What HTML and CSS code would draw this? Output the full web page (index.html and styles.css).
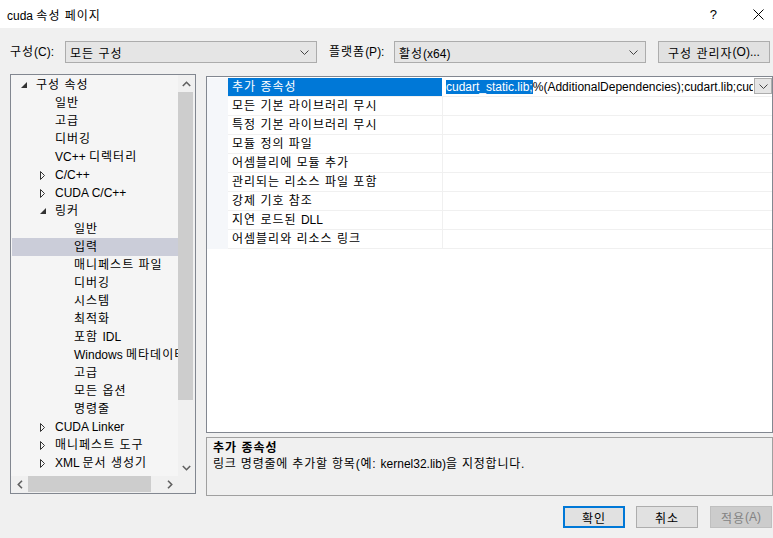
FILE: index.html
```html
<!DOCTYPE html>
<html lang="ko">
<head>
<meta charset="utf-8">
<title>cuda 속성 페이지</title>
<link rel="stylesheet" href="styles.css">
</head>
<body>
<div class="titlebar">
  <div class="title"><span class="en">cuda </span>속성 페이지</div>
  <div class="help">?</div>
  <svg class="close" width="11" height="11" viewBox="0 0 11 11"><path d="M0.5 0.5L10.5 10.5M10.5 0.5L0.5 10.5" stroke="#000" stroke-width="1" fill="none"/></svg>
</div>

<div class="toolbar">
  <div class="label l1">구성<span class="en">(C):</span></div>
  <div class="combo c1"><span>모든 구성</span><svg width="9" height="5" viewBox="0 0 9 5"><path d="M0.5 0.5L4.5 4.5L8.5 0.5" stroke="#444" fill="none"/></svg></div>
  <div class="label l2">플랫폼<span class="en">(P):</span></div>
  <div class="combo c2"><span>활성<span class="en">(x64)</span></span><svg width="9" height="5" viewBox="0 0 9 5"><path d="M0.5 0.5L4.5 4.5L8.5 0.5" stroke="#444" fill="none"/></svg></div>
  <div class="btn mgr">구성 관리자<span class="en">(O)...</span></div>
</div>

<div class="main">
  <div class="tree">
    <div class="rows">
      <div class="row lv0"><span class="tg"><svg width="6" height="6" viewBox="0 0 6 6"><polygon points="6,0 6,6 0,6" fill="#333"/></svg></span><span>구성 속성</span></div>
      <div class="row lv1"><span class="tg"></span><span>일반</span></div>
      <div class="row lv1"><span class="tg"></span><span>고급</span></div>
      <div class="row lv1"><span class="tg"></span><span>디버깅</span></div>
      <div class="row lv1"><span class="tg"></span><span><span class="en">VC++ </span>디렉터리</span></div>
      <div class="row lv1"><span class="tg"><svg width="6" height="9" viewBox="0 0 6 9"><polygon points="0.5,0.5 4.5,4.5 0.5,8.5" fill="none" stroke="#333"/></svg></span><span class="en">C/C++</span></div>
      <div class="row lv1"><span class="tg"><svg width="6" height="9" viewBox="0 0 6 9"><polygon points="0.5,0.5 4.5,4.5 0.5,8.5" fill="none" stroke="#333"/></svg></span><span class="en">CUDA C/C++</span></div>
      <div class="row lv1"><span class="tg"><svg width="6" height="6" viewBox="0 0 6 6"><polygon points="6,0 6,6 0,6" fill="#333"/></svg></span><span>링커</span></div>
      <div class="row lv2"><span class="tg"></span><span>일반</span></div>
      <div class="row lv2 sel"><span class="tg"></span><span>입력</span></div>
      <div class="row lv2"><span class="tg"></span><span>매니페스트 파일</span></div>
      <div class="row lv2"><span class="tg"></span><span>디버깅</span></div>
      <div class="row lv2"><span class="tg"></span><span>시스템</span></div>
      <div class="row lv2"><span class="tg"></span><span>최적화</span></div>
      <div class="row lv2"><span class="tg"></span><span>포함 <span class="en">IDL</span></span></div>
      <div class="row lv2"><span class="tg"></span><span><span class="en">Windows </span>메타데이터</span></div>
      <div class="row lv2"><span class="tg"></span><span>고급</span></div>
      <div class="row lv2"><span class="tg"></span><span>모든 옵션</span></div>
      <div class="row lv2"><span class="tg"></span><span>명령줄</span></div>
      <div class="row lv1"><span class="tg"><svg width="6" height="9" viewBox="0 0 6 9"><polygon points="0.5,0.5 4.5,4.5 0.5,8.5" fill="none" stroke="#333"/></svg></span><span class="en">CUDA Linker</span></div>
      <div class="row lv1"><span class="tg"><svg width="6" height="9" viewBox="0 0 6 9"><polygon points="0.5,0.5 4.5,4.5 0.5,8.5" fill="none" stroke="#333"/></svg></span><span>매니페스트 도구</span></div>
      <div class="row lv1"><span class="tg"><svg width="6" height="9" viewBox="0 0 6 9"><polygon points="0.5,0.5 4.5,4.5 0.5,8.5" fill="none" stroke="#333"/></svg></span><span><span class="en">XML </span>문서 생성기</span></div>
    </div>
    <div class="vscroll">
      <div class="arr"><svg width="9" height="6" viewBox="0 0 9 6"><path d="M0.8 5L4.5 1.3L8.2 5" stroke="#606060" stroke-width="1.6" fill="none"/></svg></div>
      <div class="vthumb"></div>
      <div class="vtrack"></div>
      <div class="arr"><svg width="9" height="6" viewBox="0 0 9 6"><path d="M0.8 1L4.5 4.7L8.2 1" stroke="#606060" stroke-width="1.6" fill="none"/></svg></div>
    </div>
    <div class="hscroll">
      <div class="harr"><svg width="6" height="9" viewBox="0 0 6 9"><path d="M5 0.8L1.3 4.5L5 8.2" stroke="#606060" stroke-width="1.6" fill="none"/></svg></div>
      <div class="hthumb"></div>
      <div class="htrack"></div>
      <div class="harr"><svg width="6" height="9" viewBox="0 0 6 9"><path d="M1 0.8L4.7 4.5L1 8.2" stroke="#606060" stroke-width="1.6" fill="none"/></svg></div>
    </div>
    <div class="corner"></div>
  </div>

  <div class="right">
    <div class="grid">
      <div class="gbody">
        <div class="gutter"></div>
        <div class="props">
          <div class="prow"><div class="pname psel">추가 종속성</div><div class="pval en"><span class="hl">cudart_static.lib;</span>%(AdditionalDependencies);cudart.lib;cudadevrt.lib;kernel32.lib</div></div>
          <div class="prow"><div class="pname">모든 기본 라이브러리 무시</div><div class="pval"></div></div>
          <div class="prow"><div class="pname">특정 기본 라이브러리 무시</div><div class="pval"></div></div>
          <div class="prow"><div class="pname">모듈 정의 파일</div><div class="pval"></div></div>
          <div class="prow"><div class="pname">어셈블리에 모듈 추가</div><div class="pval"></div></div>
          <div class="prow"><div class="pname">관리되는 리소스 파일 포함</div><div class="pval"></div></div>
          <div class="prow"><div class="pname">강제 기호 참조</div><div class="pval"></div></div>
          <div class="prow"><div class="pname">지연 로드된 <span class="en">DLL</span></div><div class="pval"></div></div>
          <div class="prow"><div class="pname">어셈블리와 리소스 링크</div><div class="pval"></div></div>
        </div>
      </div>
      <div class="ddbtn"><svg width="9" height="5" viewBox="0 0 9 5"><path d="M0.5 0.5L4.5 4.5L8.5 0.5" stroke="#444" fill="none"/></svg></div>
    </div>
    <div class="desc">
      <div class="dtitle">추가 종속성</div>
      <div class="dtext">링크 명령줄에 추가할 항목(예: <span class="en">kernel32.lib)</span>을 지정합니다.</div>
    </div>
  </div>
</div>

<div class="footer">
  <div class="btn fbtn ok">확인</div>
  <div class="btn fbtn cancel">취소</div>
  <div class="btn fbtn dis">적용<span class="en">(A)</span></div>
</div>
</body>
</html>
```

FILE: styles.css
```css
* { box-sizing: border-box; }
html, body { margin: 0; padding: 0; }
body {
  width: 773px;
  height: 538px;
  overflow: hidden;
  background: #f0f0f0;
  font-family: "Liberation Sans", "Noto Sans CJK KR", sans-serif;
  font-size: 12px;
  letter-spacing: 1px;
  color: #000;
}
.en { letter-spacing: 0; }

.titlebar {
  height: 28px;
  background: #fff;
  display: flex;
  align-items: center;
  padding-left: 7px;
}
.title { flex: 1; }
.help { font-size: 13px; margin-right: 36px; letter-spacing: 0; }
.close { margin-right: 9px; }

.toolbar {
  height: 46px;
  display: flex;
  align-items: flex-start;
  padding: 13px 0 0 10px;
}
.label { line-height: 22px; height: 22px; }
.l1 { width: 55px; }
.l2 { width: 65px; margin-left: 12px; }
.combo {
  height: 22px;
  border: 1px solid #acacac;
  background: #e5e5e5;
  display: flex;
  align-items: center;
  justify-content: space-between;
  padding: 0 7px 0 4px;
}
.c1 { width: 252px; }
.c2 { width: 252px; }
.btn {
  height: 22px;
  border: 1px solid #adadad;
  background: #e1e1e1;
  display: flex;
  align-items: center;
  justify-content: center;
}
.mgr { width: 112px; margin-left: 12px; }

.main {
  display: flex;
  align-items: flex-start;
  gap: 10px;
  padding-left: 10px;
  height: 422px;
}

.tree {
  width: 186px;
  height: 420px;
  border: 1px solid #828790;
  background: #f5f5f5;
  display: grid;
  grid-template-columns: 167px 17px;
  grid-template-rows: 401px 17px;
}
.rows { overflow: hidden; padding-top: 1px; }
.row {
  height: 18px;
  line-height: 18px;
  display: flex;
  align-items: center;
  white-space: nowrap;
  margin-left: 1px;
}
.row.sel { background: #cbcdd9; }
.tg {
  width: 17px;
  height: 18px;
  flex: none;
  display: flex;
  align-items: center;
  padding-left: 2px;
}
.lv0 { padding-left: 7px; }
.lv1 { padding-left: 26px; }
.lv2 { padding-left: 45px; }

.vscroll { background: #f0f0f0; display: flex; flex-direction: column; }
.arr { height: 17px; display: flex; align-items: center; justify-content: center; flex: none; }
.vthumb { height: 308px; background: #cdcdcd; margin: 0 2px 0 0; flex: none; }
.vtrack { flex: 1; }
.hscroll { background: #f0f0f0; display: flex; }
.harr { width: 17px; display: flex; align-items: center; justify-content: center; flex: none; }
.hthumb { width: 123px; background: #cdcdcd; margin: 0 0 1px 0; flex: none; }
.htrack { flex: 1; }
.corner { background: #f0f0f0; }

.right {
  width: 567px;
  display: flex;
  flex-direction: column;
  gap: 4px;
  padding-top: 2px;
}
.grid {
  position: relative;
  height: 357px;
  border: 1px solid #828790;
  background: #fff;
  padding-top: 1px;
}
.gbody { display: flex; }
.gutter { width: 21px; background: #f5f7fa; flex: none; }
.props { flex: 1; overflow: hidden; }
.prow {
  display: flex;
  height: 19px;
  border-bottom: 1px solid #f0f0f0;
}
.pname {
  width: 215px;
  flex: none;
  padding-left: 4px;
  line-height: 18px;
  border-right: 1px solid #f0f0f0;
  white-space: nowrap;
}
.psel { background: #0078d7; color: #fff; border-right-color: #fff; }
.pval {
  width: 310px;
  flex: none;
  padding-left: 3px;
  line-height: 18px;
  white-space: nowrap;
  overflow: hidden;
}
.hl { background: #0078d7; color: #fff; }
.ddbtn {
  position: absolute;
  top: 1px;
  right: 0;
  width: 18px;
  height: 16px;
  border: 1px solid #adadad;
  background: #e5e5e5;
  display: flex;
  align-items: center;
  justify-content: center;
}

.desc {
  height: 59px;
  border: 1px solid #a0a0a0;
  padding: 2px 0 0 6px;
}
.dtitle { font-weight: bold; line-height: 16px; }
.dtext { line-height: 16px; letter-spacing: 0.8px; }

.footer {
  display: flex;
  justify-content: flex-end;
  padding: 10px 1px 0 0;
}
.fbtn { width: 62px; }
.cancel { margin-left: 11px; }
.dis { margin-left: 12px; background: #cccccc; border-color: #bfbfbf; color: #838383; }
.ok { border: 2px solid #0078d7; }
```
